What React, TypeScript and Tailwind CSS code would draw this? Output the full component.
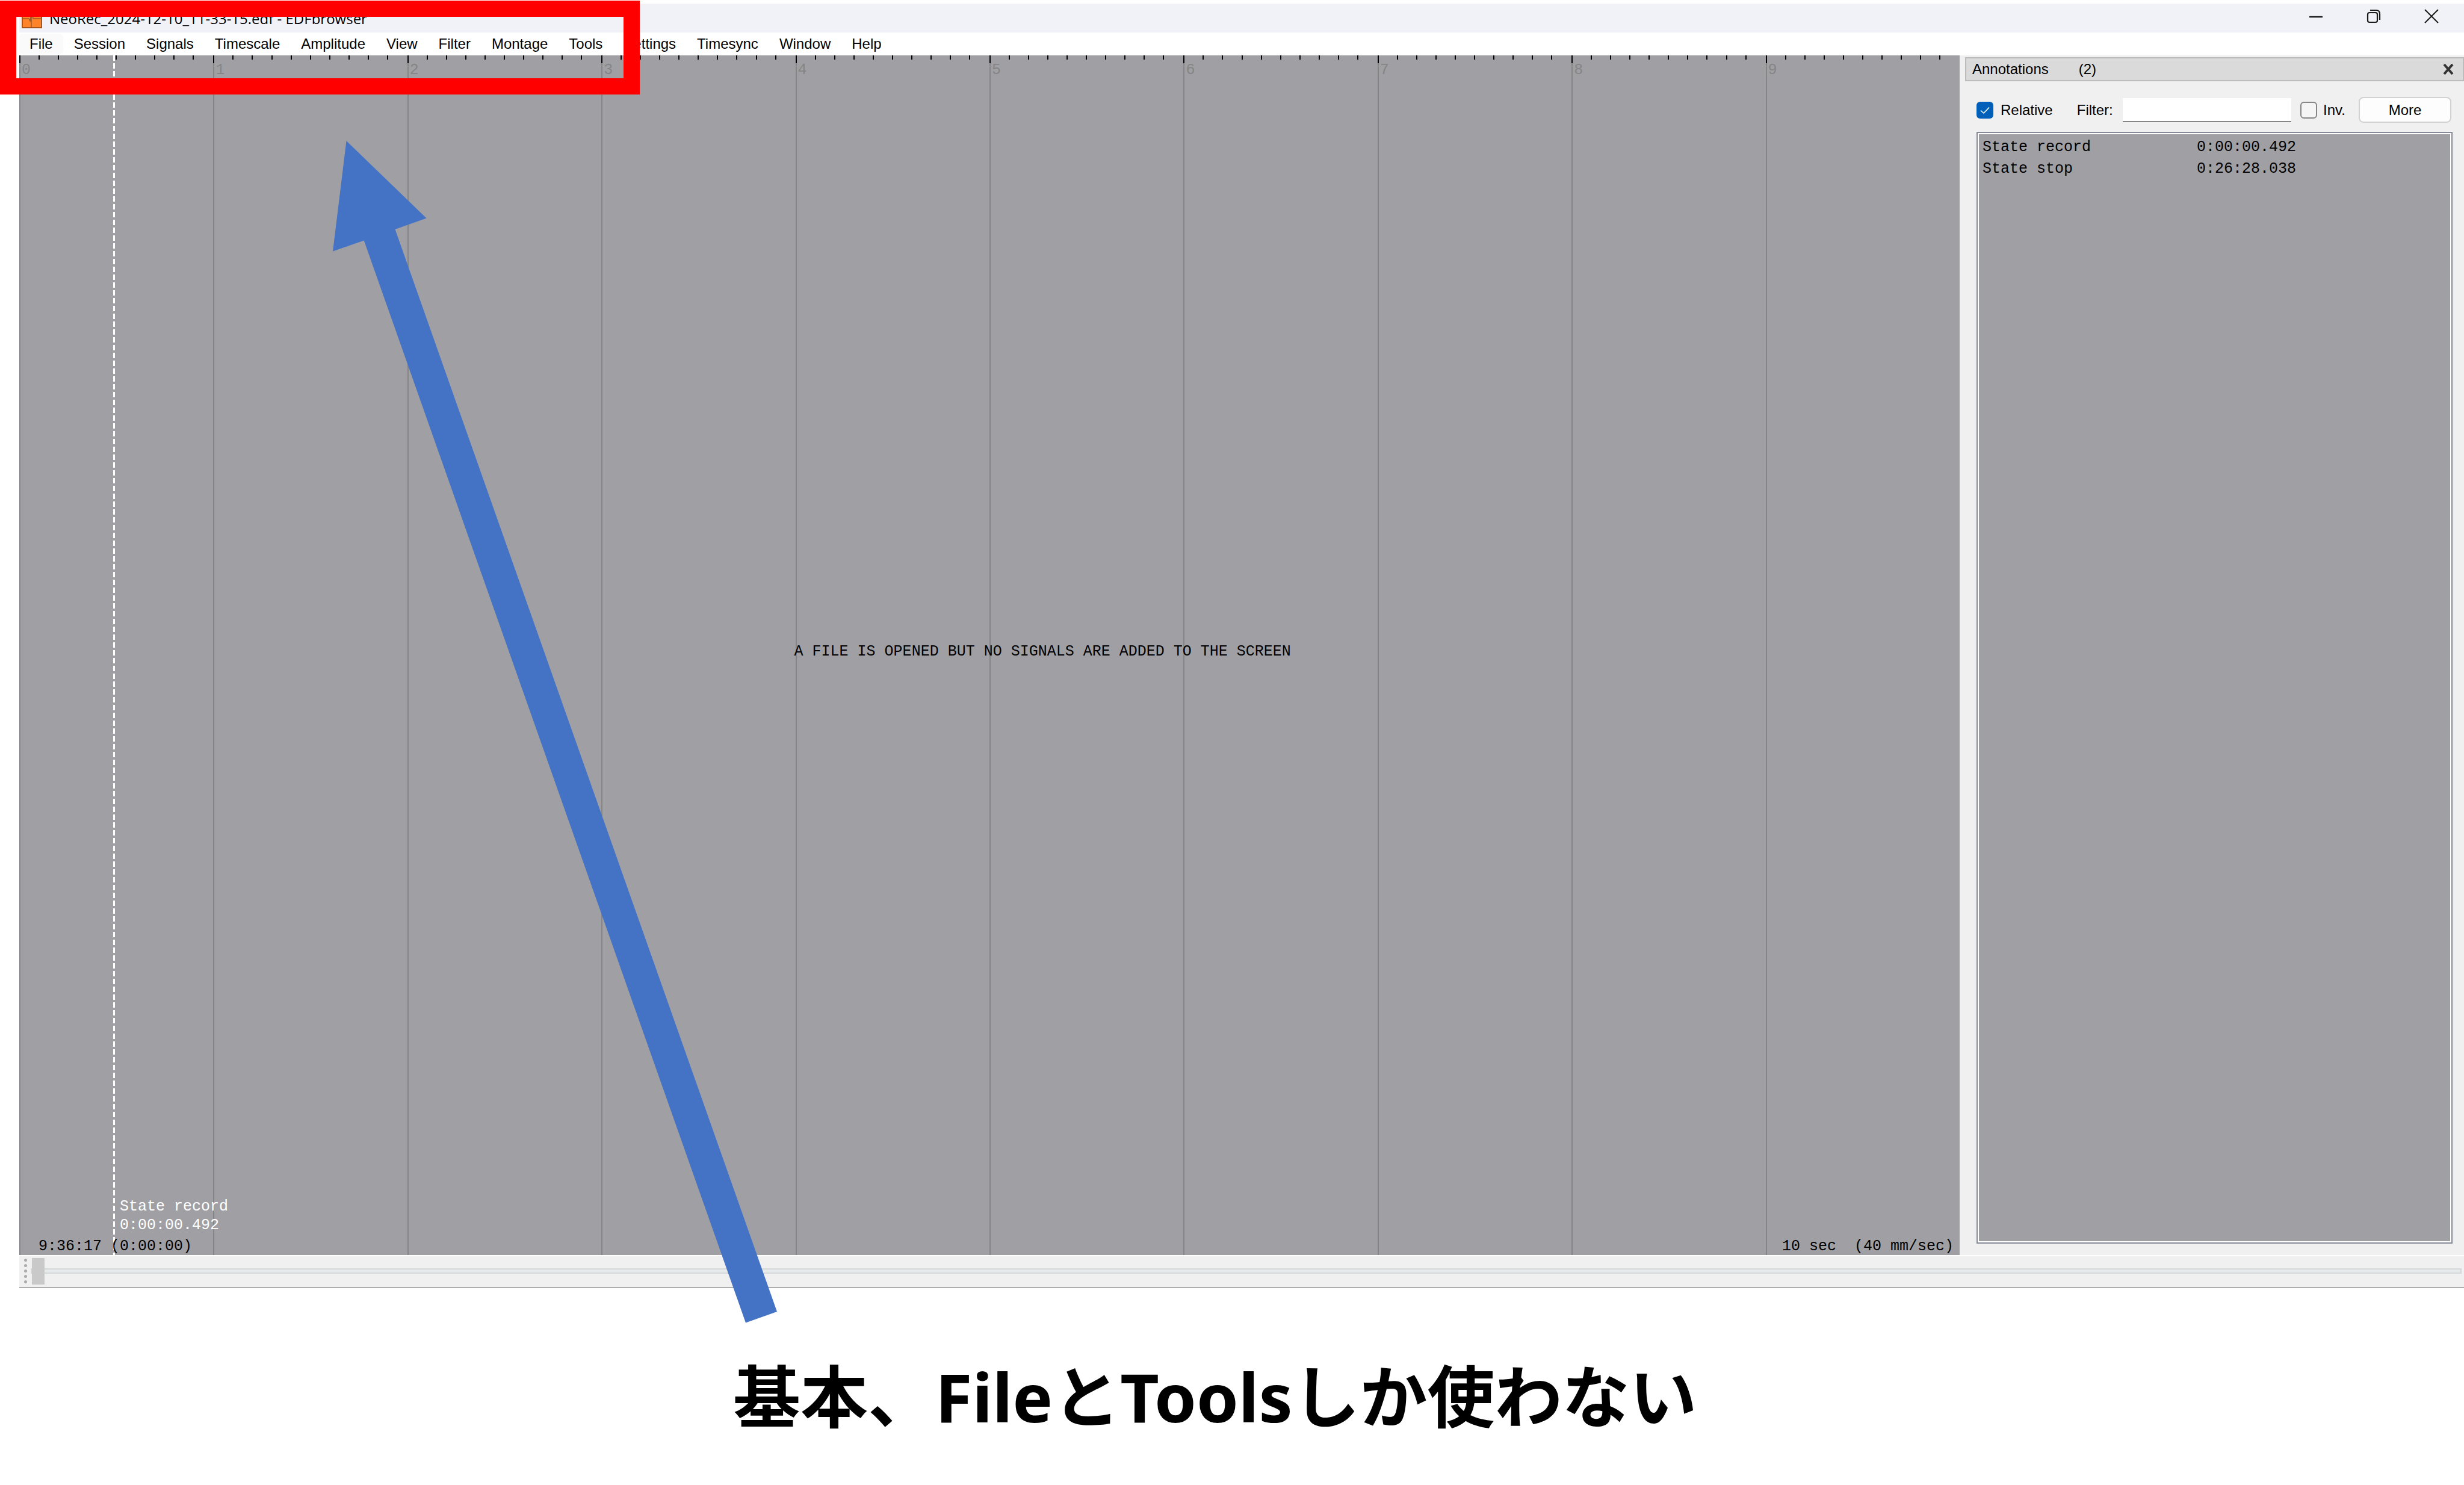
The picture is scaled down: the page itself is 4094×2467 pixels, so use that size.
import React from "react";

const menus = [
  "File", "Session", "Signals", "Timescale", "Amplitude", "View", "Filter",
  "Montage", "Tools", "Settings", "Timesync", "Window", "Help",
];

const annotations = [
  { name: "State record", time: "0:00:00.492" },
  { name: "State stop", time: "0:26:28.038" },
];

const seconds = [0, 1, 2, 3, 4, 5, 6, 7, 8, 9];
const tenths = [1, 2, 3, 4, 5, 6, 7, 8, 9];

function AppIcon() {
  return (
    <svg className="h-[34px] w-[34px] shrink-0" viewBox="0 0 34 34" fill="none" aria-hidden="true">
      <rect x="0" y="0" width="34" height="34" fill="#ff8429" />
      <path d="M0 18H12L14 22L17 5L19 18H34M16 0V34" stroke="#9c5a2a" strokeWidth="1.500" />
      <path d="M1 0V33H33V0" stroke="#a8551c" strokeWidth="2" />
    </svg>
  );
}

function TitleBar() {
  return (
    <header className="flex h-12 items-center bg-[#f1f2f7] pl-1 pr-[42px]">
      <AppIcon />
      <h1 className="ml-3 grow whitespace-nowrap pt-0.5 font-['Open_Sans',sans-serif] text-2xl leading-8 text-black">
        NeoRec_2024-12-10_11-33-15.edf - EDFbrowser
      </h1>
      <div className="flex items-center gap-[72px] pb-1.5">
        <button type="button" aria-label="Minimize">
          <svg className="block h-6 w-6" viewBox="0 0 24 24" fill="none" stroke="#1a1a1a" strokeWidth="2.4" aria-hidden="true">
            <path d="M1 13H23" />
          </svg>
        </button>
        <button type="button" aria-label="Restore">
          <svg className="block h-6 w-6" viewBox="0 0 24 24" fill="none" stroke="#1a1a1a" strokeWidth="2.2" aria-hidden="true">
            <rect x="2" y="6" width="16" height="16" rx="3" />
            <path d="M6 2H16Q22 2 22 8V18" />
          </svg>
        </button>
        <button type="button" aria-label="Close">
          <svg className="block h-6 w-6" viewBox="0 0 24 24" fill="none" stroke="#1a1a1a" strokeWidth="2" aria-hidden="true">
            <path d="M1 1L23 23M23 1L1 23" />
          </svg>
        </button>
      </div>
    </header>
  );
}

function MenuBar() {
  return (
    <nav className="flex h-[38px] items-center gap-px bg-white">
      {menus.map((m, i) => (
        <button
          key={m}
          type="button"
          className={
            i === 0
              ? "h-[34px] rounded-md bg-[#fafafa] px-[17px] text-2xl leading-8"
              : "h-[34px] px-[17px] text-2xl leading-8"
          }
        >
          {m}
        </button>
      ))}
    </nav>
  );
}

function SignalCanvas() {
  return (
    <main className="relative flex min-w-0 grow flex-col bg-[#a0a0a4] font-['Liberation_Mono',monospace] text-[25px] leading-8">
      <div className="grid grow grid-cols-10">
        {seconds.map((s) => (
          <div key={s} className="relative border-l-2 border-[#858585]">
            <div className="grid grid-cols-10">
              <span className="-ml-0.5 h-[13px] w-0.5 bg-black" />
              {tenths.map((t) => (
                <span key={t} className="-ml-0.5 h-[7px] w-0.5 bg-black" />
              ))}
            </div>
            <span className="block pl-[2px] leading-6 text-[#858585]">{s}</span>
          </div>
        ))}
      </div>
      <p className="absolute left-[40%] top-1/2 -ml-0.5 -mt-[22px] whitespace-nowrap text-black">
        A FILE IS OPENED BUT NO SIGNALS ARE ADDED TO THE SCREEN
      </p>
      <div className="absolute bottom-0 left-[156px] top-0 w-[3px] bg-[repeating-linear-gradient(to_bottom,#fff_0px,#fff_9px,transparent_9px,transparent_13px)]" />
      <div className="absolute bottom-[34px] left-[167px] whitespace-nowrap leading-[31px] text-white">
        <p>State record</p>
        <p>0:00:00.492</p>
      </div>
      <div className="absolute inset-x-0 bottom-0 flex justify-between pl-8 pr-[10px] leading-7 text-black">
        <span>9:36:17 (0:00:00)</span>
        <span className="whitespace-pre">10 sec  (40 mm/sec)</span>
      </div>
    </main>
  );
}

function Annotations() {
  return (
    <aside className="flex w-[838px] shrink-0 flex-col bg-[#f0f0f0] pl-[9px] pt-[3px] text-2xl text-black">
      <div className="flex h-10 items-center border-2 border-[#bcbcbc] bg-[#dadada] pl-[10px] pr-[15px]">
        <h2>Annotations</h2>
        <span className="ml-[50px]">(2)</span>
        <button type="button" aria-label="Close annotations" className="ml-auto">
          <svg className="block h-[18px] w-[18px]" viewBox="0 0 18 18" fill="none" stroke="#333" strokeWidth="4" aria-hidden="true">
            <path d="M2 1L16 17M16 1L2 17" />
          </svg>
        </button>
      </div>
      <div className="mt-[26px] flex h-[43px] items-center pl-[19px] pr-[21px]">
        <label className="flex items-center gap-3">
          <span className="grid h-[28px] w-[28px]">
            <input type="checkbox" defaultChecked className="col-start-1 row-start-1 h-[28px] w-[28px] appearance-none rounded-md bg-[#005fb8]" />
            <svg className="pointer-events-none col-start-1 row-start-1 h-[28px] w-[28px]" viewBox="0 0 28 28" fill="none" stroke="#fff" strokeWidth="1.6" aria-hidden="true">
              <path d="M7 14.5L12 19L21 9.500" />
            </svg>
          </span>
          Relative
        </label>
        <label htmlFor="filter" className="ml-10">Filter:</label>
        <input id="filter" type="text" className="ml-4 h-10 min-w-0 grow basis-0 border-b-2 border-[#868686] bg-white px-2 outline-none" />
        <label className="ml-[15px] flex items-center gap-[10px]">
          <input type="checkbox" className="h-[28px] w-[28px] appearance-none rounded-md border-2 border-[#858585] bg-[#f5f5f5]" />
          Inv.
        </label>
        <button type="button" className="ml-[22px] h-[43px] w-[154px] shrink-0 rounded-lg border-2 border-[#d2d2d2] bg-[#fdfdfd]">
          More
        </button>
      </div>
      <div className="mb-[19px] ml-[19px] mr-[19px] mt-[15px] grow border-2 border-[#858a96] bg-white p-0.5">
        <div className="h-full bg-[#a0a0a4] pl-[6px] pt-1">
          <table className="font-['Liberation_Mono',monospace] text-[25px] leading-9">
            <tbody>
              {annotations.map((a) => (
                <tr key={a.name}>
                  <td className="w-[356px] p-0">{a.name}</td>
                  <td className="p-0">{a.time}</td>
                </tr>
              ))}
            </tbody>
          </table>
        </div>
      </div>
    </aside>
  );
}

function PositionBar() {
  return (
    <div className="flex h-[55px] items-center border-b-2 border-t-2 border-b-[#adadad] border-t-white bg-[#f0f0f0] pb-0.5 pl-2 pr-1">
      <div className="mr-1.5 flex flex-col gap-1">
        {[0, 1, 2, 3, 4].map((d) => (
          <span key={d} className="h-[5px] w-[5px] rounded-full bg-[#ababab]" />
        ))}
      </div>
      <input
        type="range"
        defaultValue={0}
        aria-label="File position"
        className="h-11 min-w-0 grow appearance-none bg-transparent [&::-webkit-slider-runnable-track]:h-[9px] [&::-webkit-slider-runnable-track]:border-2 [&::-webkit-slider-runnable-track]:border-[#d5d8d8] [&::-webkit-slider-runnable-track]:bg-[#e7eaea] [&::-webkit-slider-thumb]:-mt-[19px] [&::-webkit-slider-thumb]:h-11 [&::-webkit-slider-thumb]:w-[21px] [&::-webkit-slider-thumb]:appearance-none [&::-webkit-slider-thumb]:bg-[#c9c9c9]"
      />
    </div>
  );
}

export default function App() {
  return (
    <div className="relative flex min-h-screen flex-col overflow-hidden bg-white font-['Liberation_Sans',Arial,sans-serif] text-black">
      <div className="flex grow flex-col pl-8 pt-1.5">
        <TitleBar />
        <MenuBar />
        <div className="flex grow">
          <SignalCanvas />
          <Annotations />
        </div>
        <PositionBar />
      </div>
      <p className="h-[327px] whitespace-nowrap pl-[1218px] pt-24 font-['Noto_Sans','Noto_Sans_CJK_JP',sans-serif] text-[112px] font-bold leading-[168px]">
        基本、FileとToolsしか使わない
      </p>
      <div className="absolute left-0 top-px h-[156px] w-[1063px] border-[27px] border-[#ff0000]" />
      <svg className="pointer-events-none absolute left-[553px] top-[234px] h-[1964px] w-[738px]" viewBox="553 234 738 1964" aria-hidden="true">
        <path d="M575.500 234L708.500 362.500L656.500 381L1291 2179L1239 2197.500L604.700 399.500L553 417.500Z" fill="#4472c4" />
      </svg>
    </div>
  );
}
